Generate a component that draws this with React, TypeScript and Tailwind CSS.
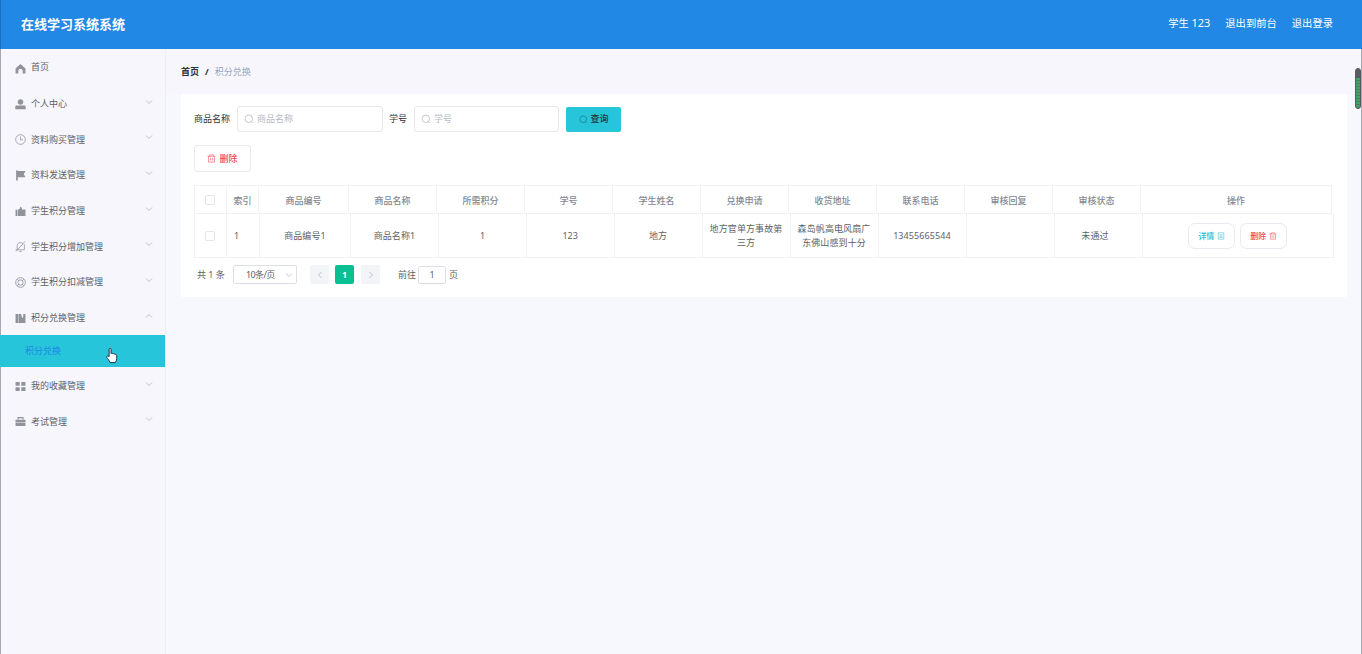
import type { ReactNode } from "react";

const G = "#909399";

function Svg({ children, className = "" }: { children: ReactNode; className?: string }) {
  return (
    <svg viewBox="0 0 20 20" className={`shrink-0 ${className}`} fill="none" stroke="currentColor" strokeWidth="1.6">
      {children}
    </svg>
  );
}

const icons: Record<string, ReactNode> = {
  home: <path d="M10 2 1 10v9h5v-4.500c0-4.500 8-4.500 8 0V19h5v-9z" fill={G} stroke="none" />,
  user: (
    <g fill={G} stroke="none">
      <circle cx="10" cy="5.500" r="5" />
      <path d="M0.500 18.500v-4c0-1.500 1-2.500 2.500-2.500h14c1.500 0 2.500 1 2.500 2.500v4z" />
    </g>
  ),
  clock: (
    <g strokeWidth="1.4">
      <circle cx="10" cy="10" r="8.800" />
      <path d="M10 4.500V10.500h4.500" />
    </g>
  ),
  flag: <path d="M2 1h3v1h14l-3 5.500 3 5.500H5v6H2z" fill={G} stroke="none" />,
  thumb: <path d="M1 7h3.500v11H1zM5.500 18V7c3-1 3.500-2.500 3.500-5 3-.5 4 1.500 3.500 4.500H19V18z" fill={G} stroke="none" />,
  bell: <path d="M1 16h16V6M4 16V9c0-4 2.500-6 6-6 2 0 3.500.8 4.500 2M8 19h4M18 1 2 19" strokeWidth="1.4" />,
  help: (
    <g strokeWidth="1.5">
      <circle cx="10" cy="10" r="8.800" />
      <circle cx="10" cy="10" r="4.800" />
      <path d="m4 4 3 3m6 6 3 3m0-12-3 3m-6 6-3 3" />
    </g>
  ),
  books: <path d="M1 2h5.500v16H1zM7.300 2h3.700l2 7 2-2V2h4v16H7.300z" fill={G} stroke="none" />,
  grid: <path d="M1 2h7.500v6.500H1zM11.500 2H19v6.500h-7.500zM1 11.500h7.500V18H1zM11.500 11.500H19V18h-7.500z" fill={G} stroke="none" />,
  bag: (
    <g>
      <path d="M1 7h18v5H1zM1 12.600h18V18H1z" fill={G} stroke="none" />
      <path d="M5.500 7V3h9v4" stroke={G} strokeWidth="2" />
    </g>
  ),
};

function Chevron({ className = "" }: { className?: string }) {
  return (
    <svg viewBox="0 0 8 8" className={`size-2 shrink-0 ${className}`} fill="none" stroke="#b2b5bc" strokeWidth="0.8">
      <path d="m1 2.500 3 3 3-3" />
    </svg>
  );
}

function Search({ className = "" }: { className?: string }) {
  return (
    <Svg className={className}>
      <circle cx="9.500" cy="9.500" r="7.500" />
      <path d="m14.500 15 3 3" />
    </Svg>
  );
}

function Trash({ className = "" }: { className?: string }) {
  return (
    <Svg className={className}>
      <path d="M1 5h18M6 5V2h8v3M3.500 5v13h13V5M8 8.500v6m4-6v6" strokeWidth="1.3" />
    </Svg>
  );
}

function Item({ icon, label, arrow = "down" }: { icon: string; label: string; arrow?: "down" | "up" | "none" }) {
  return (
    <li className="flex h-[35.7px] items-center pr-[12px] pl-[14px] text-[#606266]">
      <span className="flex pt-[3px] text-[#909399]">
        <Svg className="size-[11px]">{icons[icon]}</Svg>
      </span>
      <span className={`ml-[5px] flex-1 leading-[14px] ${arrow === "none" ? "pt-0" : "pt-[3px]"}`}>{label}</span>
      {arrow !== "none" && <Chevron className={arrow === "up" ? "mb-[2px] rotate-180" : "mb-[2px]"} />}
    </li>
  );
}

const heads = ["索引", "商品编号", "商品名称", "所需积分", "学号", "学生姓名", "兑换申请", "收货地址", "联系电话", "审核回复", "审核状态", "操作"];
const cells = ["商品编号1", "商品名称1", "1", "123", "地方", "地方官单方事故第三方", "森岛帆高电风扇广东佛山感到十分", "13455665544", "", "未通过"];

const cell = "flex items-center justify-center border-r border-b border-[#f1f2f6]";

function Field({ label, width }: { label: string; width: string }) {
  return (
    <label className="flex items-center">
      <span className="text-[#303133]">{label}</span>
      <span className={`ml-[7px] flex h-[26px] items-center rounded-[3px] border border-[#e6e8ee] pl-[6px] text-[#b6bac4] ${width}`}>
        <Search className="size-[10px]" />
        <span className="ml-[3px]">{label}</span>
      </span>
    </label>
  );
}

function Checkbox() {
  return <span className="mr-px size-[10px] rounded-[2px] border border-[#e2e4ea] bg-white" />;
}

export default function App() {
  return (
    <div className="relative flex h-[654px] w-[1362px] flex-col overflow-hidden bg-[#f6f8fd] font-['Noto_Sans','Noto_Sans_CJK_SC',sans-serif] text-[9px] leading-[14px] text-[#606266]">
      <header className="flex h-[49px] shrink-0 items-center justify-between border-l border-[#1a6fc0] bg-[#2188e5] pr-[29px] pl-[20px] text-white">
        <h1 className="pb-[2px] text-[13px] leading-5 font-bold">在线学习系统系统</h1>
        <nav className="flex gap-[15px] pb-[3px] text-[10.3px]">
          <span>学生 <span className="text-[11px]">123</span></span>
          <span>退出到前台</span>
          <span>退出登录</span>
        </nav>
      </header>

      <div className="flex min-h-0 flex-1 border-x border-[#a6a8b2]">
        <aside className="w-[165px] shrink-0 border-r border-[#edeff5] bg-[#f6f6fc]">
          <ul>
            <Item icon="home" label="首页" arrow="none" />
            <Item icon="user" label="个人中心" />
            <Item icon="clock" label="资料购买管理" />
            <Item icon="flag" label="资料发送管理" />
            <Item icon="thumb" label="学生积分管理" />
            <Item icon="bell" label="学生积分增加管理" />
            <Item icon="help" label="学生积分扣减管理" />
            <Item icon="books" label="积分兑换管理" arrow="up" />
            <li className="mt-[0.4px] -ml-px flex h-8 items-center bg-[#26c5da] pl-[25px] text-[#2188e5]">
              <span className="flex-1">积分兑换</span>
              <svg viewBox="0 0 14 18" className="mt-[9px] mr-[46px] h-[17px] w-[14px]" fill="#fff" stroke="#20243a" strokeWidth="1" strokeLinejoin="round">
                <path d="M4 10V2.500c0-1.500 2-1.500 2 0V7c.6-.8 1.800-.5 2 .3.700-.6 1.700-.3 2 .5 1-.4 2 .1 2 1.200v3c0 2-.7 3-1.500 4.500H5C4 14 2.500 12.500 1.500 11c-.7-1 .6-2 1.500-1.200z" />
              </svg>
            </li>
            <Item icon="grid" label="我的收藏管理" />
            <Item icon="bag" label="考试管理" />
          </ul>
        </aside>

        <main className="min-w-0 flex-1 pl-[15px]">
          <div className="-ml-[15px] flex h-[45px] items-center bg-[#f6f6fc] pl-[15px]">
            <span className="font-bold text-[#303133]">首页</span>
            <span className="mx-[6px] font-bold text-[#303133]">/</span>
            <span className="text-[#97a8be]">积分兑换</span>
          </div>

          <section className="h-[203px] w-[1166px] rounded-[2px] bg-white pt-[12px] pl-[13px]">
            <form className="flex h-[26px] items-center">
              <Field label="商品名称" width="w-[146px]" />
              <span className="w-[6px]" />
              <Field label="学号" width="w-[145px]" />
              <button type="button" className="ml-[7px] flex h-[25px] w-[55px] items-center justify-center gap-[3px] rounded-[2px] bg-[#26c5da] font-medium text-[#203540]">
                <Search className="size-[9px] text-[#1a7c91]" />
                查询
              </button>
            </form>
            <button type="button" className="mt-[13px] flex h-[27px] w-[57px] items-center justify-center gap-[3px] rounded-[3px] border border-[#e9e9ee] font-medium text-[#ef4a50]">
              <Trash className="size-[9px]" />
              删除
            </button>

            <div className="mt-[13px] grid h-[29px] w-[1138px] grid-cols-[32px_32px_90px_88px_88px_88px_88px_88px_88px_88px_88px_88px_1fr] border-t border-l border-[#f1f2f6] font-medium text-[#85888f]">
              <div className={cell}><Checkbox /></div>
              {heads.map((h) => (
                <div key={h} className={`${cell} pt-[2px]`}>{h}</div>
              ))}
            </div>
            <div className="grid h-[44px] w-[1140px] grid-cols-[32px_33px_91px_88px_88px_87.5px_88px_88px_88px_88px_88px_88px_1fr] border-l border-[#f1f2f6]">
              <div className={cell}><Checkbox /></div>
              <div className={`${cell} justify-start! pl-[7px]`}>1</div>
              {cells.map((c, i) => (
                <div key={i} className={`${cell} px-[6px] text-center tracking-[0.1px] ${i === 9 ? "pr-[12px]" : ""}`}>{c}</div>
              ))}
              <div className={`${cell} gap-[5px] text-[8px]`}>
                <button type="button" className="flex h-[26px] w-[47px] items-center justify-center gap-[3px] rounded-[7px] border border-[#e8eaf0] font-medium text-[#26bdd0]">
                  详情
                  <Svg className="size-[8px]"><path d="M3 2h14v16H3zM6 7h8M6 10.500h8M6 14h8" strokeWidth="1.3" /></Svg>
                </button>
                <button type="button" className="flex h-[26px] w-[47px] items-center justify-center gap-[3px] rounded-[7px] border border-[#e8eaf0] font-medium text-[#ef4a50]">
                  删除
                  <Trash className="size-[8px]" />
                </button>
              </div>
            </div>

            <div className="mt-[7px] flex h-[19px] items-center pl-[3px]">
              <span className="w-[36px]">共 1 条</span>
              <span className="flex h-[19px] w-[64px] items-center rounded-[2px] border border-[#dcdfe6] pr-[3px] pl-[12px]">
                <span className="flex-1 tracking-[-0.6px]">10条/页</span>
                <Chevron />
              </span>
              <span className="ml-[13px] flex size-[19px] items-center justify-center rounded-[2px] bg-[#f3f4f7]"><Chevron className="rotate-90" /></span>
              <span className="ml-[6px] flex size-[19px] items-center justify-center rounded-[2px] bg-[#0abf92] font-bold text-white">1</span>
              <span className="ml-[7px] flex size-[19px] items-center justify-center rounded-[2px] bg-[#f3f4f7]"><Chevron className="-rotate-90" /></span>
              <span className="ml-[18px]">前往</span>
              <span className="ml-[2px] flex h-[18px] w-[28px] items-center justify-center rounded-[2px] border border-[#dcdfe6]">1</span>
              <span className="ml-[3px]">页</span>
            </div>
          </section>
        </main>
      </div>

      <div className="absolute top-[68px] right-px flex h-[41px] w-[6px] flex-col overflow-hidden rounded-[3px] border border-[#5a5b60] bg-[#5a5b60]">
        <div className="mt-[9px] flex-1 bg-[repeating-linear-gradient(#41a364_0_2px,#55785f_2px_3px)]" />
      </div>
    </div>
  );
}
